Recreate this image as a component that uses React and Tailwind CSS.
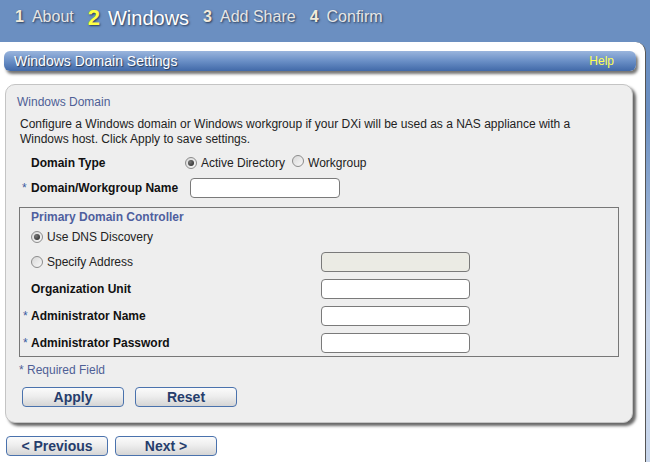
import React from 'react';

const font = { fontFamily: '"Liberation Sans", Arial, sans-serif' };

function Radio({ checked }) {
  return (
    <span className="inline-flex h-[12px] w-[12px] shrink-0 items-center justify-center rounded-full border border-[#8c8c8c] bg-[linear-gradient(135deg,#d8d8d8,#f8f8f8)]">
      {checked && <span className="h-[6px] w-[6px] rounded-full bg-[radial-gradient(circle_at_35%_35%,#777,#222)]" />}
    </span>
  );
}

function TextInput({ disabled, className = '' }) {
  return (
    <div
      className={`h-[20px] w-[149px] rounded-[4px] border border-[#7a7a7a] ${
        disabled ? 'bg-[#ebebe4]' : 'bg-white'
      } ${className}`}
    />
  );
}

function Button({ children, className = '' }) {
  return (
    <button
      className={`h-[20px] w-[102px] rounded-[4px] border border-[#4a72ad] bg-[linear-gradient(#fbfbfb,#eeeeee_45%,#d5d5d5)] text-[14px] font-bold leading-[17px] text-[#263d6c] ${className}`}
    >
      {children}
    </button>
  );
}

function Step({ num, label, active }) {
  return (
    <div className="flex items-baseline gap-2 [text-shadow:1px_1px_2px_#2a3a55]">
      <span className={active ? 'text-[22px] font-bold text-[#ffff44]' : 'text-[16px] font-bold text-[#f1ead9]'}>
        {num}
      </span>
      <span className={active ? 'text-[20px] text-white' : 'text-[16px] text-[#e6e6e6]'}>{label}</span>
    </div>
  );
}

export default function App() {
  return (
    <div
      style={font}
      className="flex h-[462px] w-[650px] flex-col overflow-hidden bg-[linear-gradient(#6b8fc1,#6b8fc1_25%,#c6d4ea_70%,#c9d7ec)]"
    >
      {/* wizard steps */}
      <div className="flex h-[42px] shrink-0 items-center gap-[14px] bg-[#6b8fc1] pl-[15px] pb-[8px]">
        <Step num="1" label="About" />
        <Step num="2" label="Windows" active />
        <Step num="3" label="Add Share" />
        <Step num="4" label="Confirm" />
      </div>

      <div className="flex flex-1">
        <div className="w-[646px] rounded-tr-[10px] border-r border-[#555] bg-white pt-[9px]">
          {/* title bar */}
          <div className="ml-[4px] flex h-[20px] w-[632px] items-center justify-between rounded-[6px] bg-[linear-gradient(#9ab5dd,#6a8fc6_50%,#4169a8)] pl-[10px] pr-[22px] shadow-[2px_3px_3px_rgba(0,0,0,0.55)]">
            <span className="text-[14px] text-white [text-shadow:1px_1px_1px_#2a3a55]">Windows Domain Settings</span>
            <span className="text-[12px] text-[#ffff55]">Help</span>
          </div>

          {/* main panel */}
          <div className="ml-[5px] mt-[13px] h-[339px] w-[628px] rounded-[10px] border border-[#c4c4c4] bg-[#eeeeee] pl-[11px] pt-[10px] shadow-[3px_3px_3px_rgba(0,0,0,0.6)]">
            <div className="text-[12px] leading-[14px] text-[#4f5f96]">Windows Domain</div>
            <p className="ml-[3px] mt-[8px] w-[580px] text-[12px] leading-[15px] text-[#222]">
              Configure a Windows domain or Windows workgroup if your DXi will be used as a NAS appliance with a
              Windows host. Click Apply to save settings.
            </p>

            <div className="mt-[6px] flex h-[20px] items-center text-[12px]">
              <span className="w-[14px]" />
              <span className="w-[154px] font-bold text-[#111]">Domain Type</span>
              <Radio checked />
              <span className="ml-[4px] text-[#222]">Active Directory</span>
              <span className="ml-[7px]">
                <Radio />
              </span>
              <span className="ml-[4px] text-[#222]">Workgroup</span>
            </div>

            <div className="mt-[5px] flex h-[20px] items-center text-[12px]">
              <span className="w-[14px] pl-[5px] text-[#3a5aa0]">*</span>
              <span className="w-[159px] font-bold text-[#111]">Domain/Workgroup Name</span>
              <TextInput className="w-[150px]" />
            </div>

            {/* primary domain controller */}
            <div className="ml-[2px] mt-[9px] h-[150px] w-[600px] border border-[#777] pl-[11px] pt-[2px] text-[12px]">
              <div className="font-bold leading-[14px] text-[#4f5f9e]">Primary Domain Controller</div>
              <div className="mt-[3px] flex h-[20px] items-center">
                <Radio checked />
                <span className="ml-[4px] text-[#222]">Use DNS Discovery</span>
              </div>
              <div className="mt-[5px] flex h-[20px] items-center">
                <Radio />
                <span className="ml-[4px] w-[274px] text-[#222]">Specify Address</span>
                <TextInput disabled />
              </div>
              <div className="mt-[7px] flex h-[20px] items-center">
                <span className="w-[290px] font-bold text-[#111]">Organization Unit</span>
                <TextInput />
              </div>
              <div className="-ml-[8px] mt-[7px] flex h-[20px] items-center">
                <span className="w-[8px] text-[#3a5aa0]">*</span>
                <span className="w-[290px] font-bold text-[#111]">Administrator Name</span>
                <TextInput />
              </div>
              <div className="-ml-[8px] mt-[7px] flex h-[20px] items-center">
                <span className="w-[8px] text-[#3a5aa0]">*</span>
                <span className="w-[290px] font-bold text-[#111]">Administrator Password</span>
                <TextInput />
              </div>
            </div>

            <div className="ml-[2px] mt-[6px] text-[12px] leading-[14px] text-[#4f5f96]">* Required Field</div>
            <div className="ml-[5px] mt-[10px] flex gap-[11px]">
              <Button>Apply</Button>
              <Button>Reset</Button>
            </div>
          </div>

          <div className="ml-[6px] mt-[13px] flex gap-[7px]">
            <Button>&lt; Previous</Button>
            <Button>Next &gt;</Button>
          </div>
        </div>
      </div>
    </div>
  );
}
